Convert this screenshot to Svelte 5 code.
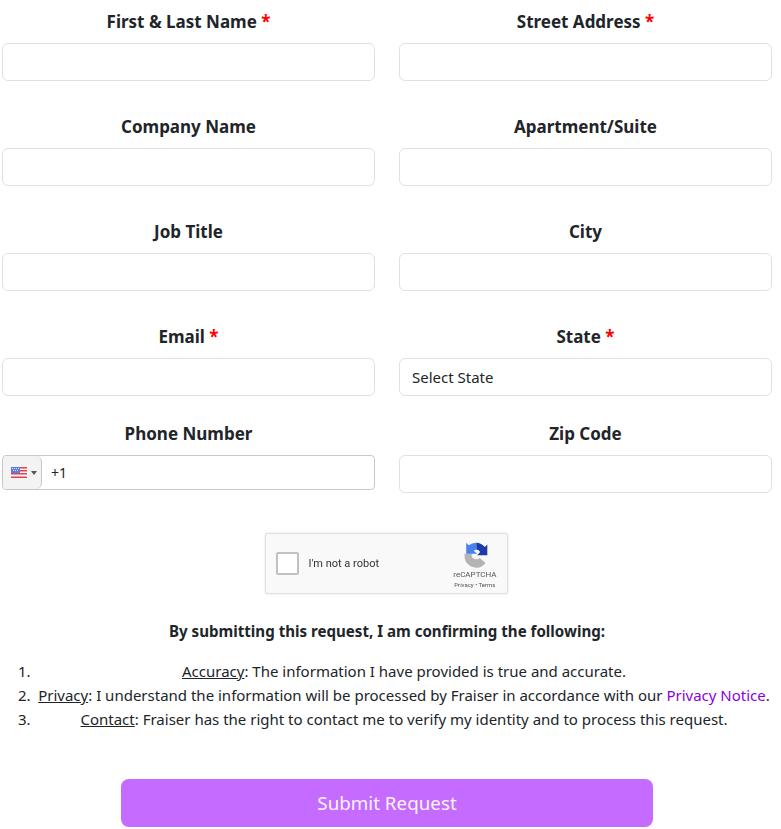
<script>
  const left = [
    { label: "First & Last Name", required: true },
    { label: "Company Name" },
    { label: "Job Title" },
    { label: "Email", required: true }
  ];
  const right = [
    { label: "Street Address", required: true },
    { label: "Apartment/Suite" },
    { label: "City" },
    { label: "State", required: true, value: "Select State" }
  ];
  const rows = left.map((item, i) => [item, right[i]]);
</script>

<div class="page">
  <form class="form">
    {#each rows as row}
      <div class="row">
        {#each row as field}
          <div class="field">
            <div class="label">{field.label}{#if field.required}&nbsp;<span class="req">*</span>{/if}</div>
            <div class="input">{field.value ?? ""}</div>
          </div>
        {/each}
      </div>
    {/each}

    <div class="row last">
      <div class="field">
        <div class="label">Phone Number</div>
        <div class="phone">
          <div class="flag-box">
            <svg class="flag" viewBox="0 0 16 11" width="16" height="11">
              <rect width="16" height="11" fill="#f4f4f8" />
              <rect y="0" width="16" height="1.5" fill="#e0444c" />
              <rect y="3" width="16" height="1.5" fill="#e0444c" />
              <rect y="6" width="16" height="1.5" fill="#e0444c" />
              <rect y="9.5" width="16" height="1.5" fill="#e0444c" />
              <rect width="9" height="6" fill="#5a7be0" />
              <g fill="#dfe6ff">
                <rect x="1" y="1" width="1" height="1" />
                <rect x="3" y="1" width="1" height="1" />
                <rect x="5" y="1" width="1" height="1" />
                <rect x="7" y="1" width="1" height="1" />
                <rect x="2" y="3" width="1" height="1" />
                <rect x="4" y="3" width="1" height="1" />
                <rect x="6" y="3" width="1" height="1" />
              </g>
            </svg>
            <span class="caret"></span>
          </div>
          <span class="dial">+1</span>
        </div>
      </div>
      <div class="field">
        <div class="label">Zip Code</div>
        <div class="input"></div>
      </div>
    </div>

    <div class="captcha-wrap">
      <div class="captcha">
        <span class="check"></span>
        <span class="robot">I'm not a robot</span>
        <div class="brand">
          <svg class="logo" viewBox="0 0 32 32" width="27" height="27">
            <!-- grey lower arc -->
            <path d="M3 15 L3 19 A14 14 0 0 0 28 26 L21 20 A6 6 0 0 1 11 17 L13 15 Z" fill="#b4b4b4" />
            <!-- blue left arrow -->
            <path d="M5 2 L5 15 L18 15 L14 11.5 A5 5 0 0 1 17 10 L17 2 A14 14 0 0 0 8 5 Z" fill="#4a80f0" />
            <!-- dark blue right arrow -->
            <path d="M17 2 A14 14 0 0 1 27 7 L30 4 L30 17 L18 17 L21.5 13 A5 5 0 0 0 17 10 Z" fill="#1c3aa9" />
          </svg>
          <span class="brand-name">reCAPTCHA</span>
          <span class="brand-links">Privacy • Terms</span>
        </div>
      </div>
    </div>

    <p class="confirm">By submitting this request, I am confirming the following:</p>

    <ol class="terms">
      <li><u>Accuracy</u>: The information I have provided is true and accurate.</li>
      <li><u>Privacy</u>: I understand the information will be processed by Fraiser in accordance with our <span class="link">Privacy Notice</span>.</li>
      <li><u>Contact</u>: Fraiser has the right to contact me to verify my identity and to process this request.</li>
    </ol>

    <div class="actions">
      <button type="button" class="submit">Submit Request</button>
    </div>
  </form>
</div>

<style>
  :global(body) {
    margin: 0;
    background: #fff;
  }

  .page {
    font-family: "Noto Sans", "Open Sans", sans-serif;
    color: #212529;
    padding: 10px 9px 0 2px;
  }

  .row {
    display: grid;
    grid-template-columns: 373px 373px;
    column-gap: 24px;
    margin-bottom: 34px;
  }

  .row:nth-child(4) {
    margin-bottom: 26px;
  }

  .row.last {
    margin-bottom: 40px;
  }

  .label {
    font-size: 17px;
    font-weight: 700;
    line-height: 24px;
    height: 33px;
    text-align: center;
  }

  .req {
    color: #f00;
  }

  .input {
    box-sizing: border-box;
    height: 38px;
    border: 1px solid #dee2e6;
    border-radius: 6px;
    padding: 0 12px;
    font-size: 15px;
    line-height: 36px;
  }

  .phone {
    box-sizing: border-box;
    height: 35px;
    border: 1px solid #c8c8c8;
    border-radius: 4px;
    display: flex;
    align-items: center;
    font-size: 14px;
  }

  .flag-box {
    box-sizing: border-box;
    width: 39px;
    height: 33px;
    background: #f3f3f3;
    border-right: 1px solid #c8c8c8;
    border-radius: 4px 6px 6px 4px;
    display: flex;
    align-items: center;
    padding-left: 8px;
    gap: 4px;
  }

  .caret {
    width: 0;
    height: 0;
    border-left: 3px solid transparent;
    border-right: 3px solid transparent;
    border-top: 4px solid #555;
  }

  .dial {
    margin-left: 9px;
  }

  .captcha-wrap {
    display: flex;
    justify-content: center;
    padding-right: 2px;
  }

  .captcha {
    box-sizing: border-box;
    width: 243px;
    height: 61px;
    background: #f9f9f9;
    border: 1px solid #e0e0e0;
    border-radius: 2px;
    box-shadow: 0 0 3px rgba(0, 0, 0, 0.1);
    display: flex;
    align-items: center;
    padding: 0 10px;
    filter: blur(0.5px);
  }

  .check {
    box-sizing: border-box;
    width: 23px;
    height: 23px;
    background: #fff;
    border: 2px solid #c1c1c1;
    border-radius: 2px;
  }

  .robot {
    font-family: Roboto, sans-serif;
    font-size: 11px;
    color: #333;
    margin-left: 10px;
  }

  .brand {
    margin-left: auto;
    margin-top: 3px;
    display: flex;
    flex-direction: column;
    align-items: center;
    font-family: Roboto, sans-serif;
    color: #555;
  }

  .logo {
    margin: 0 0 2px 2px;
  }

  .brand-name {
    font-size: 8px;
    line-height: 10px;
  }

  .brand-links {
    font-size: 6px;
    line-height: 9px;
  }

  .confirm {
    margin: 26px 0 0;
    font-size: 15.1px;
    font-weight: 700;
    line-height: 22px;
    text-align: center;
  }

  .terms {
    margin: 17px 0 0;
    padding: 0 0 0 34px;
    font-size: 15px;
    line-height: 24px;
    text-align: center;
  }

  .terms li::marker {
    content: counter(list-item) ". \200A";
  }

  .link {
    color: #8a00e6;
  }

  .actions {
    display: flex;
    justify-content: center;
    margin-top: 48px;
  }

  .submit {
    width: 532px;
    height: 48px;
    border: none;
    border-radius: 8px;
    background: #c56bff;
    color: #fbf5ff;
    font-family: inherit;
    font-size: 18.8px;
  }
</style>
